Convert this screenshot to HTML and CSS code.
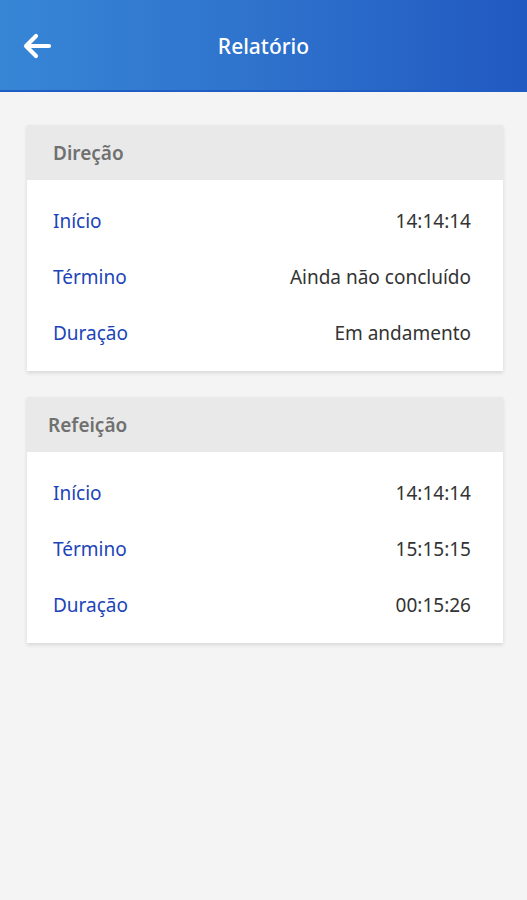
FILE: index.html
```html
<!DOCTYPE html>
<html lang="pt">
<head>
    <meta charset="UTF-8">
    <meta name="viewport" content="width=device-width, initial-scale=1.0">
    <title>Relatório</title>
    <link rel="stylesheet" href="styles.css">
</head>
<body>

    <header class="topbar">
        <a class="back">
            <svg width="30" height="28" viewBox="0 0 30 28">
                <path d="M27 14 H5 M14 4 L4 14 L14 24" fill="none" stroke="#fff" stroke-width="4.2" stroke-linecap="round" stroke-linejoin="round"/>
            </svg>
        </a>
        <h1>Relatório</h1>
    </header>

    <main class="content">
        <section class="card">
            <div class="card-head">Direção</div>
            <div class="card-body">
                <div class="row"><span class="label">Início</span><span class="value">14:14:14</span></div>
                <div class="row"><span class="label">Término</span><span class="value">Ainda não concluído</span></div>
                <div class="row"><span class="label">Duração</span><span class="value">Em andamento</span></div>
            </div>
        </section>

        <section class="card">
            <div class="card-head shifted">Refeição</div>
            <div class="card-body">
                <div class="row"><span class="label">Início</span><span class="value">14:14:14</span></div>
                <div class="row"><span class="label">Término</span><span class="value">15:15:15</span></div>
                <div class="row"><span class="label">Duração</span><span class="value">00:15:26</span></div>
            </div>
        </section>
    </main>

</body>
</html>
```

FILE: styles.css
```css
body { font-family: "Noto Sans", "Open Sans", sans-serif; margin: 0; padding: 0; background-color: #f4f4f4; min-height: 900px; }
.topbar { height: 90px; border-bottom: 2px solid #1f5cc4; background: linear-gradient(90deg, #3786d6 0%, #2e72cc 50%, #2159c1 100%); display: flex; align-items: center; position: relative; }
.back { display: flex; margin-left: 22px; margin-top: 2px; }
.topbar h1 { position: absolute; left: 0; right: 0; top: 0; bottom: 0; margin: 0; display: flex; align-items: center; justify-content: center; color: white; font-size: 21px; font-weight: 500; margin-top: 2px; pointer-events: none; }
.content { padding: 33px 24px 0 27px; display: flex; flex-direction: column; gap: 26px; }
.card { background-color: white; box-shadow: 0 2px 4px rgba(0, 0, 0, 0.12); }
.card-head { background-color: #e9e9e9; height: 55px; display: flex; align-items: center; padding-left: 26px; color: #707070; font-size: 19px; font-weight: 600; }
.card-head.shifted { padding-left: 21px; }
.card-body { padding: 13px 32px 10px 26px; }
.row { height: 56px; display: flex; align-items: center; justify-content: space-between; font-size: 19px; }
.label { color: #1c44b8; }
.value { color: #333; }
```
